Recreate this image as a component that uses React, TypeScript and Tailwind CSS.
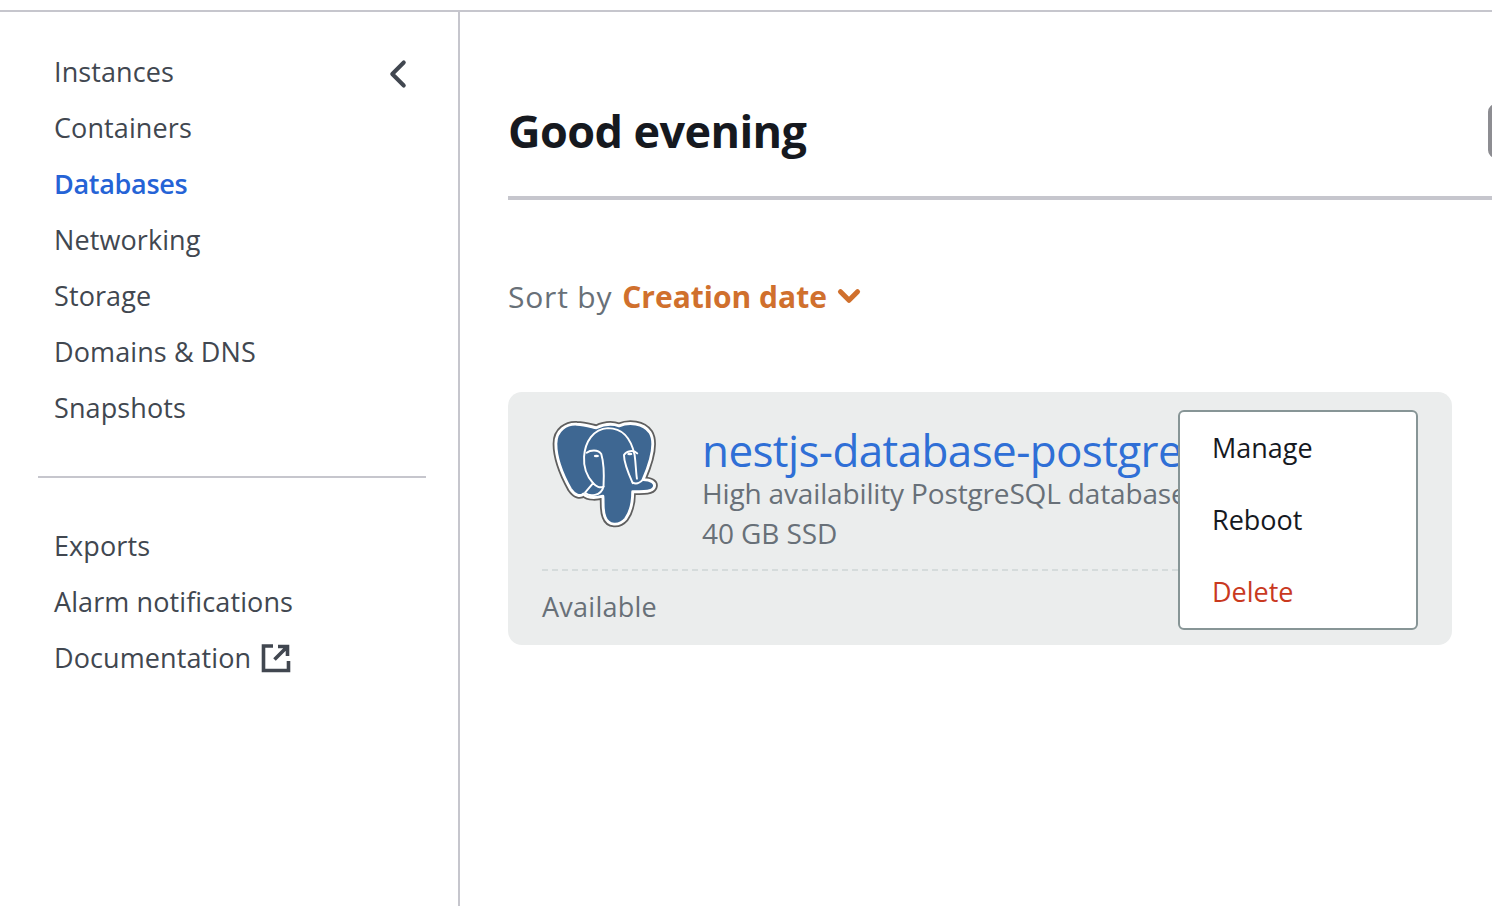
import { ChevronDown, ChevronLeft } from "lucide-react";

const mainNav = ["Instances", "Containers", "Databases", "Networking", "Storage", "Domains & DNS", "Snapshots"];

// postgres elephant, traced by hand
function PostgresLogo() {
  const body =
    "M75 130C75 88 108 68 140 70C165 71 185 78 200 81C225 69 250 68 270 75C300 62 345 66 365 95C382 122 374 172 344 241C368 241 384 250 378 265C370 281 340 278 312 278C312 312 306 340 290 362C270 385 236 384 226 355C218 335 222 310 220 292C205 296 175 300 160 285C150 295 134 290 120 270C95 225 75 175 75 130Z";
  return (
    <svg width="107" height="109" viewBox="60 54 330 336" fill="none" className="shrink-0">
      <path d={body} stroke="#5f5f5f" strokeWidth="20" strokeLinejoin="round" />
      <path d={body} fill="#3e6792" stroke="#fff" strokeWidth="9" strokeLinejoin="round" />
      <g stroke="#fff" strokeWidth="6" strokeLinecap="round" strokeLinejoin="round">
        <path d="M190 252C168 228 160 200 162 170C165 125 190 84 236 82C285 82 308 120 318 165C322 195 322 220 325 238" />
        <path d="M170 158C180 150 205 146 215 162C222 185 224 225 222 262" />
        <path d="M285 165C292 152 315 148 326 160M285 165C285 190 300 225 312 252" />
        <path d="M190 252L165 281C178 295 215 292 222 262C212 268 198 262 190 252Z" />
        <path d="M312 250C322 256 335 250 344 241" />
      </g>
      <ellipse cx="200" cy="168" rx="8" ry="4" fill="#fff" />
      <ellipse cx="303" cy="162" rx="8" ry="4" fill="#fff" />
    </svg>
  );
}

export default function App() {
  return (
    <div className="flex h-[906px] flex-col overflow-hidden bg-white font-['Open_Sans','Noto_Sans',sans-serif]">
      <div className="h-[12px] shrink-0 border-b-2 border-[#c6c6cd]" />
      <div className="flex min-h-0 flex-1">
        {/* sidebar */}
        <aside className="w-[460px] shrink-0 border-r-2 border-[#c6c6cd] pt-[32px]">
          <div className="relative">
            <ChevronLeft className="absolute left-[375px] top-[7px] text-[#414750]" size={46} strokeWidth={2.1} />
            <ul className="pl-[54px] text-[27px] tracking-[0.1px] text-[#414750]">
              {mainNav.map((label) => (
                <li
                  key={label}
                  className={
                    label === "Databases"
                      ? "flex h-[56px] items-center font-semibold tracking-[-0.3px] text-[#2563d6]"
                      : "flex h-[56px] items-center"
                  }
                >
                  {label}
                </li>
              ))}
            </ul>
          </div>
          <div className="ml-[38px] mt-[40px] h-[2px] w-[388px] bg-[#c6c6cd]" />
          <ul className="mt-[40px] pl-[54px] text-[27px] tracking-[0.1px] text-[#414750]">
            <li className="flex h-[56px] items-center">Exports</li>
            <li className="flex h-[56px] items-center">Alarm notifications</li>
            <li className="flex h-[56px] items-center gap-[10px]">
              Documentation
              <svg width="30" height="30" viewBox="0 0 30 30" fill="none" stroke="#414750" strokeWidth="3.6">
                <path d="M12 3H2.5V27.5H27.5V18" />
                <path d="M13.5 16.5L25 5M17 3.5H26.5V13" />
              </svg>
            </li>
          </ul>
        </aside>

        {/* main */}
        <main className="min-w-0 flex-1 overflow-hidden pl-[48px]">
          <div className="flex h-[188px] items-center border-b-[4px] border-[#c6c6cd] pt-[54px]">
            <h1 className="w-[980px] shrink-0 text-[45px] font-bold tracking-[-0.6px] text-[#16191f]">Good evening</h1>
            <div className="h-[54px] w-[80px] shrink-0 rounded-lg border-[4px] border-[#8d8d92]" />
          </div>
          <div className="mt-[72px] flex h-[48px] items-center text-[30px] tracking-[0.8px] text-[#687078]">
            Sort by
            <span className="ml-[10px] font-bold tracking-normal text-[#d0702d]">Creation date</span>
            <ChevronDown className="ml-[5px] text-[#d0702d]" size={34} strokeWidth={3.6} />
          </div>
          <section className="relative mt-[72px] h-[253px] w-[944px] rounded-[14px] bg-[#ebeded] px-[34px] pt-[27px]">
            <div className="flex items-start gap-[44px] pl-[9px]">
              <PostgresLogo />
              <div className="min-w-0 flex-1 whitespace-nowrap">
                <div className="mt-[5px] text-[44px] font-medium leading-[52px] tracking-[-0.6px] text-[#2f6fd6]">nestjs-database-postgres</div>
                <div className="text-[28px] leading-[34px] tracking-[-0.15px] text-[#687078]">High availability PostgreSQL database</div>
                <div className="mt-[6px] text-[28px] leading-[34px] tracking-[-0.1px] text-[#687078]">40 GB SSD</div>
              </div>
            </div>
            <div className="mt-[19px] border-t-2 border-dashed border-[#d5dbdb]" />
            <div className="mt-[18px] text-[27px] leading-[36px] tracking-[0.25px] text-[#687078]">Available</div>

            {/* popup menu */}
            <ul className="absolute left-[670px] top-[18px] h-[220px] w-[240px] rounded-[6px] border-2 border-[#879596] bg-white pl-[32px] text-[27px] text-[#16191f]">
              <li className="flex h-[72px] items-center">Manage</li>
              <li className="flex h-[72px] items-center">Reboot</li>
              <li className="flex h-[72px] items-center text-[#c9391f]">Delete</li>
            </ul>
          </section>
        </main>
      </div>
    </div>
  );
}
